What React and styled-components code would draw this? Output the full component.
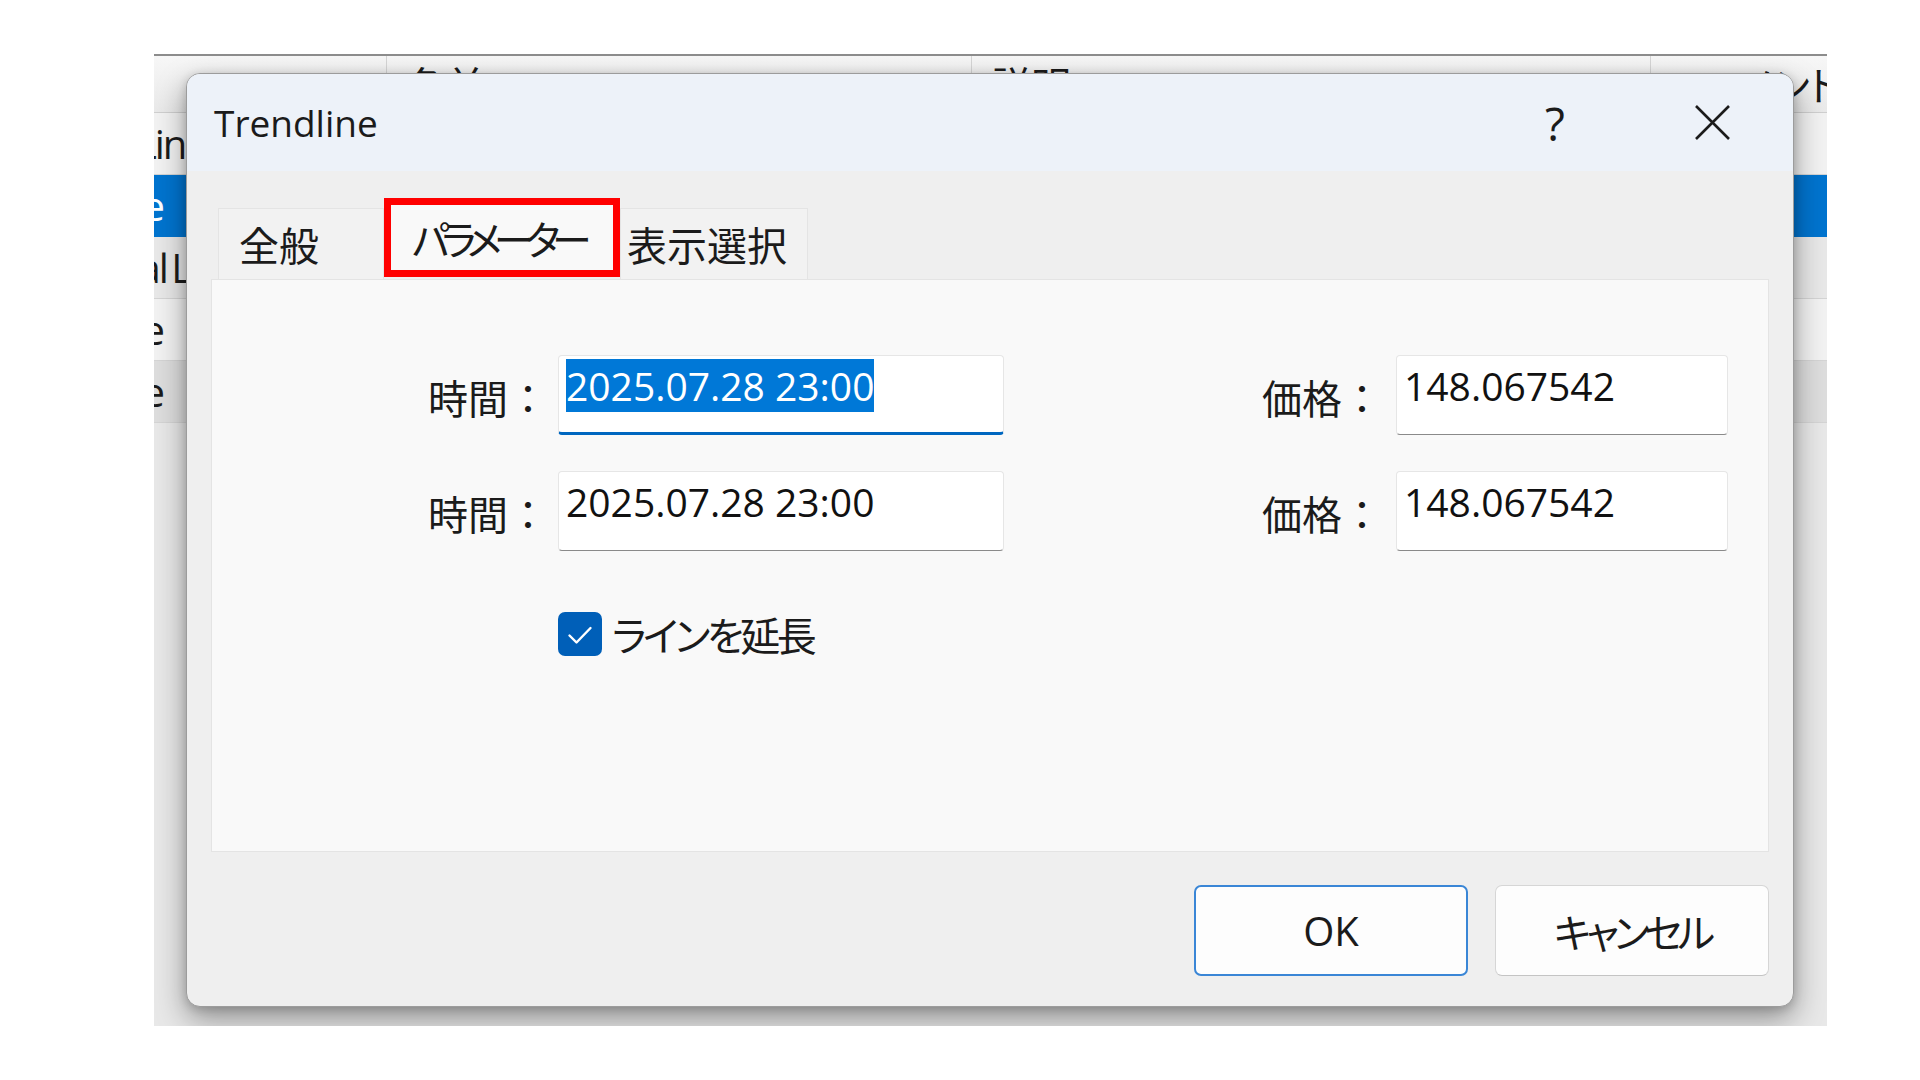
import styled, { createGlobalStyle } from 'styled-components'

const GlobalStyle = createGlobalStyle`
  html, body {
    margin: 0;
    padding: 0;
    background: #ffffff;
  }
  body {
    font-family: 'Open Sans', 'Noto Sans CJK JP', sans-serif;
    font-feature-settings: 'palt';
    color: #1b1b1b;
  }
  * {
    box-sizing: border-box;
  }
`

const columns = '232px 585px 679px 1fr'

const rows = [
  { name: 'Vertical Line', tone: '#f2f2f2', indent: -145 },
  { name: 'Trendline', tone: '#0074cf', selected: true, indent: -150 },
  { name: 'Horizontal Line', tone: '#e8e8e8', indent: -161 },
  { name: 'Trendline', tone: '#f2f2f2', indent: -150 },
  { name: 'Trendline', tone: '#dddddd', indent: -150 },
]

const App = () => {
  return (
    <Page>
      <GlobalStyle />
      <Backdrop>
        <HeaderRow>
          <HeaderCell>名前</HeaderCell>
          <HeaderCell>名前</HeaderCell>
          <HeaderCell>説明</HeaderCell>
          <HeaderCell $indent={50}>コメント</HeaderCell>
        </HeaderRow>
        {rows.map((r, i) => (
          <Row key={i} $tone={r.tone} $selected={r.selected}>
            <NameCell $indent={r.indent}>{r.name}</NameCell>
            <div />
            <div />
            <div />
          </Row>
        ))}

        <Dialog>
          <TitleBar>
            <Title>Trendline</Title>
            <TitleButton $w={152}>?</TitleButton>
            <TitleButton $w={162}>
              <svg width='37' height='37' viewBox='0 0 37 37'>
                <path d='M2 2 L35 35 M35 2 L2 35' stroke='#1b1b1b' strokeWidth='2.6' fill='none' />
              </svg>
            </TitleButton>
          </TitleBar>

          <Body>
            <TabRow>
              <Tab $w={166} $pad={20}>全般</Tab>
              <Tab $w={236} $pad={21} $active $tight={-8}>パラメーター</Tab>
              <Tab $w={188} $pad={6}>表示選択</Tab>
            </TabRow>

            <Panel>
              <FormGrid>
                <Label $gap={10}>時間：</Label>
                <Field $focused>
                  <Selected>2025.07.28 23:00</Selected>
                </Field>
                <Label $gap={14}>価格：</Label>
                <Field>148.067542</Field>

                <Label $gap={10}>時間：</Label>
                <Field>2025.07.28 23:00</Field>
                <Label $gap={14}>価格：</Label>
                <Field>148.067542</Field>

                <CheckRow>
                  <CheckBox>
                    <svg width='44' height='44' viewBox='0 0 44 44'>
                      <polyline
                        points='11.5,23.5 18.5,30.5 32.5,16'
                        stroke='#ffffff'
                        strokeWidth='2.4'
                        fill='none'
                        strokeLinecap='round'
                        strokeLinejoin='round'
                      />
                    </svg>
                  </CheckBox>
                  <CheckLabel>ラインを延長</CheckLabel>
                </CheckRow>
              </FormGrid>
            </Panel>

            <Footer>
              <Button $primary>OK</Button>
              <Button $tight={-5}>キャンセル</Button>
            </Footer>
          </Body>
        </Dialog>
      </Backdrop>
    </Page>
  )
}

export default App

const Page = styled.div`
  width: 1920px;
  height: 1080px;
  padding: 54px 0 0 154px;
`

const Backdrop = styled.div`
  position: relative;
  width: 1673px;
  height: 972px;
  overflow: hidden;
  background: #e8e8e8;
  border-top: 2px solid #8c8c8c;
  font-size: 40px;
`

const HeaderRow = styled.div`
  display: grid;
  grid-template-columns: ${columns};
  height: 57px;
  background: linear-gradient(#f7f7f7, #e9e9e9);
  border-bottom: 1px solid #cfcfcf;
`

const HeaderCell = styled.div`
  display: flex;
  align-items: center;
  padding-left: ${(p) => p.$indent || 19}px;
  border-left: 1px solid #d6d6d6;
  white-space: nowrap;
  overflow: hidden;
  color: #1b1b1b;

  &:first-child {
    border-left: none;
    visibility: hidden;
  }
`

const Row = styled.div`
  display: grid;
  grid-template-columns: ${columns};
  height: 62px;
  background: ${(p) => p.$tone};
  color: ${(p) => (p.$selected ? '#ffffff' : '#1b1b1b')};
  border-bottom: 1px solid ${(p) => (p.$selected ? '#0074cf' : '#d4d4d4')};
`

const NameCell = styled.div`
  display: flex;
  align-items: center;
  white-space: nowrap;
  text-indent: ${(p) => p.$indent}px;
  letter-spacing: -2px;
  word-spacing: -4px;
  overflow: hidden;
`

const Dialog = styled.div`
  position: absolute;
  left: 32px;
  top: 17px;
  width: 1608px;
  height: 934px;
  display: flex;
  flex-direction: column;
  background: #efefef;
  border: 1px solid #9c9c9c;
  border-radius: 14px;
  box-shadow: 0 12px 30px rgba(0, 0, 0, 0.38), 0 2px 10px rgba(0, 0, 0, 0.16);
`

const TitleBar = styled.div`
  flex: none;
  height: 97px;
  display: flex;
  align-items: center;
  padding-left: 27px;
  background: #edf2f9;
  border-radius: 13px 13px 0 0;
`

const Title = styled.div`
  flex: 1;
  font-size: 37px;
  color: #1b1b1b;
`

const TitleButton = styled.div`
  width: ${(p) => p.$w}px;
  height: 100%;
  display: flex;
  align-items: center;
  justify-content: center;
  font-size: 46px;
  color: #1b1b1b;
`

const Body = styled.div`
  flex: 1;
  display: flex;
  flex-direction: column;
  padding: 27px 24px 30px 24px;
`

const TabRow = styled.div`
  display: flex;
  align-items: flex-end;
  height: 81px;
  margin-left: 7px;
`

const Tab = styled.div`
  width: ${(p) => p.$w}px;
  height: ${(p) => (p.$active ? 79 : 71)}px;
  margin-bottom: ${(p) => (p.$active ? 2 : 0)}px;
  display: flex;
  align-items: center;
  padding-left: ${(p) => p.$pad}px;
  font-size: 40px;
  letter-spacing: ${(p) => p.$tight || 0}px;
  white-space: nowrap;
  background: ${(p) => (p.$active ? '#f9f9f9' : '#f2f2f2')};
  border: ${(p) => (p.$active ? '7px solid #ff0000' : '1px solid #e4e4e4')};
  border-bottom: ${(p) => (p.$active ? '7px solid #ff0000' : 'none')};
`

const Panel = styled.div`
  height: 573px;
  background: #f9f9f9;
  border: 1px solid #e4e4e4;
  padding: 75px 0 0 22px;
`

const FormGrid = styled.div`
  display: grid;
  grid-template-columns: 324px 446px 392px 332px;
  grid-auto-rows: 80px;
  row-gap: 36px;
`

const Label = styled.div`
  display: flex;
  align-items: center;
  justify-content: flex-end;
  padding: 4px ${(p) => p.$gap}px 0 0;
  font-size: 40px;
  font-feature-settings: normal;
  color: #1b1b1b;
`

const Field = styled.div`
  background: #ffffff;
  border: 1px solid #e6e6e6;
  border-bottom: ${(p) => (p.$focused ? '3px solid #0067c0' : '1px solid #8a8a8a')};
  border-radius: 4px;
  padding: 6px 0 0 7px;
  font-size: 39px;
  line-height: 48px;
  color: #111111;
`

const Selected = styled.span`
  background: #0078d7;
  color: #ffffff;
`

const CheckRow = styled.div`
  grid-column: 2 / span 3;
  height: 44px;
  margin-top: 25px;
  display: flex;
  align-items: center;
  gap: 10px;
`

const CheckBox = styled.div`
  width: 44px;
  height: 44px;
  border-radius: 7px;
  background: #005fb8;
  display: flex;
`

const CheckLabel = styled.div`
  font-size: 40px;
  letter-spacing: -3.5px;
  color: #1b1b1b;
`

const Footer = styled.div`
  display: flex;
  justify-content: flex-end;
  gap: 27px;
  margin-top: 33px;
`

const Button = styled.div`
  width: 274px;
  height: 91px;
  display: flex;
  align-items: center;
  justify-content: center;
  font-size: 40px;
  letter-spacing: ${(p) => p.$tight || 0}px;
  color: #1b1b1b;
  background: #fdfdfd;
  border-radius: 7px;
  border: ${(p) => (p.$primary ? '2px solid #3a86d6' : '1px solid #d6d6d6')};
  border-bottom-color: ${(p) => (p.$primary ? '#3a86d6' : '#c4c4c4')};
`
